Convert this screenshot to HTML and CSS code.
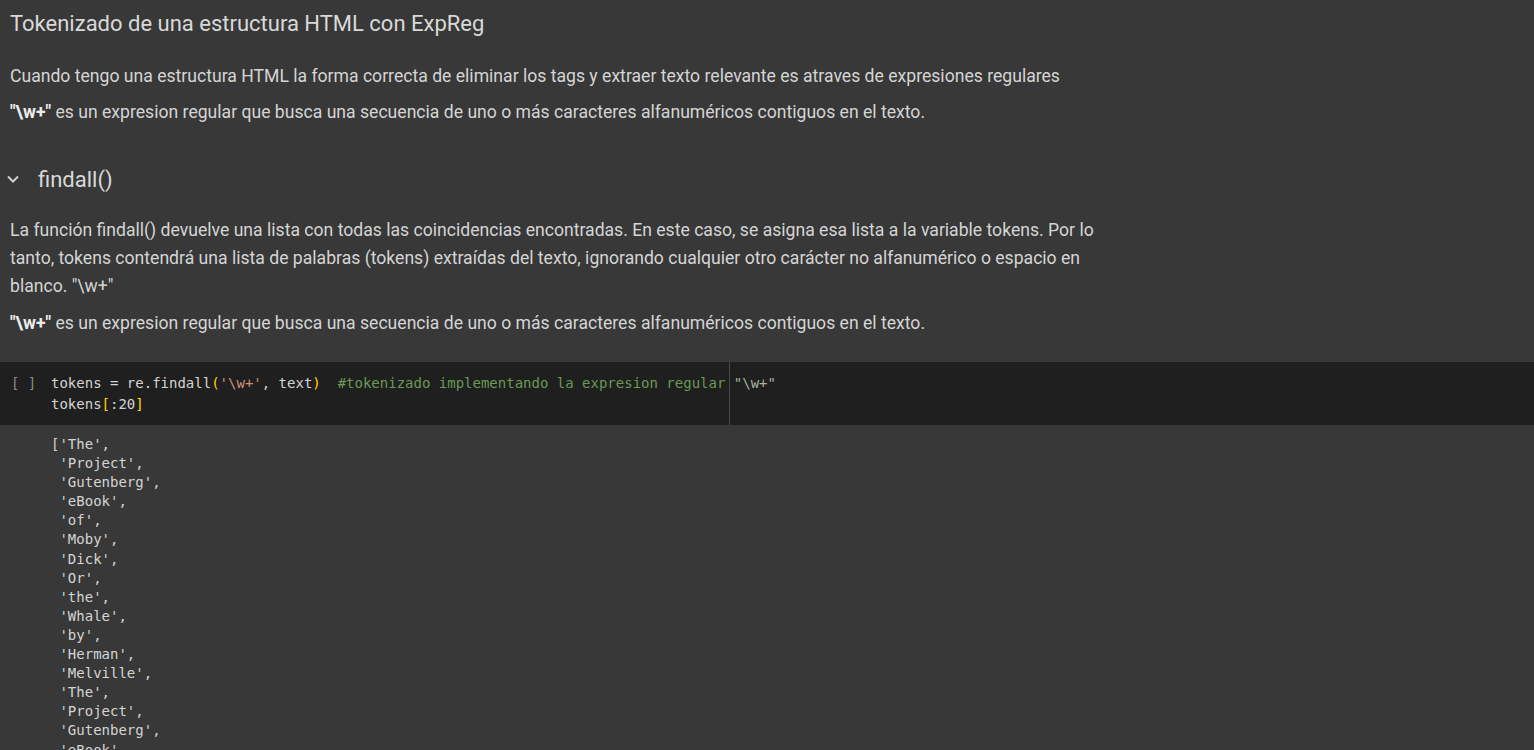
FILE: index.html
```html
<!DOCTYPE html>
<html lang="es">
<head>
<meta charset="utf-8">
<title>Tokenizado</title>
<link rel="stylesheet" href="styles.css">
</head>
<body>
<div class="nb">
  <div class="md">
    <h2 class="h-title">Tokenizado de una estructura HTML con ExpReg</h2>
    <p class="p first">Cuando tengo una estructura HTML la forma correcta de eliminar los tags y extraer texto relevante es atraves de expresiones regulares</p>
    <p class="p"><b>"\w+"</b> es un expresion regular que busca una secuencia de uno o más caracteres alfanuméricos contiguos en el texto.</p>
  </div>
  <div class="section">
    <svg class="chev" width="14" height="10" viewBox="0 0 14 10"><path d="M2 2.5 L7 7.5 L12 2.5" fill="none" stroke="#cfcfcf" stroke-width="2"/></svg>
    <h3 class="h-sec">findall()</h3>
  </div>
  <div class="md md2">
    <p class="p wrap">La función findall() devuelve una lista con todas las coincidencias encontradas. En este caso, se asigna esa lista a la variable tokens. Por lo tanto, tokens contendrá una lista de palabras (tokens) extraídas del texto, ignorando cualquier otro carácter no alfanumérico o espacio en blanco. "\w+"</p>
    <p class="p"><b>"\w+"</b> es un expresion regular que busca una secuencia de uno o más caracteres alfanuméricos contiguos en el texto.</p>
  </div>
  <div class="cell">
    <div class="run">[ ]</div>
    <div class="code"><div class="ruler"></div><pre>tokens = re.findall<span class="br">(</span><span class="str">'\w+'</span>, text<span class="br">)</span>  <span class="cm">#tokenizado implementando la expresion regular</span> <span class="cm2">"\w+"</span>
tokens<span class="br">[</span>:20<span class="br">]</span></pre></div>
  </div>
  <pre class="out">['The',
 'Project',
 'Gutenberg',
 'eBook',
 'of',
 'Moby',
 'Dick',
 'Or',
 'the',
 'Whale',
 'by',
 'Herman',
 'Melville',
 'The',
 'Project',
 'Gutenberg',
 'eBook',</pre>
</div>
</body>
</html>
```
FILE: styles.css
```css
html, body {
  margin: 0;
  padding: 0;
  background: #383838;
  overflow: hidden;
  height: 750px;
}
body {
  font-family: Roboto, "Noto Sans", sans-serif;
  color: #d5d5d5;
}
.nb {
  display: flex;
  flex-direction: column;
}
.md {
  padding: 0 10px;
}
.h-title {
  margin: 0;
  padding-top: 11px;
  font-size: 22px;
  font-weight: 400;
  line-height: 26px;
  color: #d9d9d9;
}
.p {
  margin: 0;
  font-size: 17.6px;
  line-height: 28px;
  color: #d5d5d5;
}
.p.first {
  margin-top: 25px;
}
.p + .p {
  margin-top: 8px;
}
.p.wrap + .p {
  margin-top: 9px;
}
.p b {
  font-weight: 700;
  color: #ececec;
}
.wrap {
  max-width: 1100px;
}
.section {
  display: flex;
  align-items: center;
  height: 30px;
  margin-top: 38px;
}
.chev {
  margin-left: 6px;
  margin-right: 18px;
}
.h-sec {
  margin: 0;
  font-size: 22px;
  font-weight: 400;
  color: #d9d9d9;
}
.md2 {
  margin-top: 22px;
}
.cell {
  margin-top: 25px;
  background: #1f1f1f;
  height: 63px;
  display: flex;
  align-items: flex-start;
}
.run {
  width: 51px;
  padding-left: 11px;
  box-sizing: border-box;
  font-family: "DejaVu Sans Mono", "Liberation Mono", monospace;
  font-size: 14px;
  color: #8a8a8a;
  padding-top: 11px;
  line-height: 21px;
}
.code {
  position: relative;
  flex: 1;
  height: 63px;
}
.ruler {
  position: absolute;
  left: 678px;
  top: 0;
  bottom: 0;
  width: 1px;
  background: #4a4a4a;
}
.code pre {
  margin: 0;
  padding-top: 11px;
  font-family: "DejaVu Sans Mono", "Liberation Mono", monospace;
  font-size: 14px;
  line-height: 21px;
  color: #d4d4d4;
}
.br { color: #ffd700; }
.str { color: #ce9178; }
.cm { color: #6a9955; }
.cm2 { color: #a6b3a0; }
.out {
  margin: 0;
  padding: 10px 0 0 51px;
  font-family: "DejaVu Sans Mono", "Liberation Mono", monospace;
  font-size: 14px;
  line-height: 19.1px;
  color: #d4d4d4;
}
```
